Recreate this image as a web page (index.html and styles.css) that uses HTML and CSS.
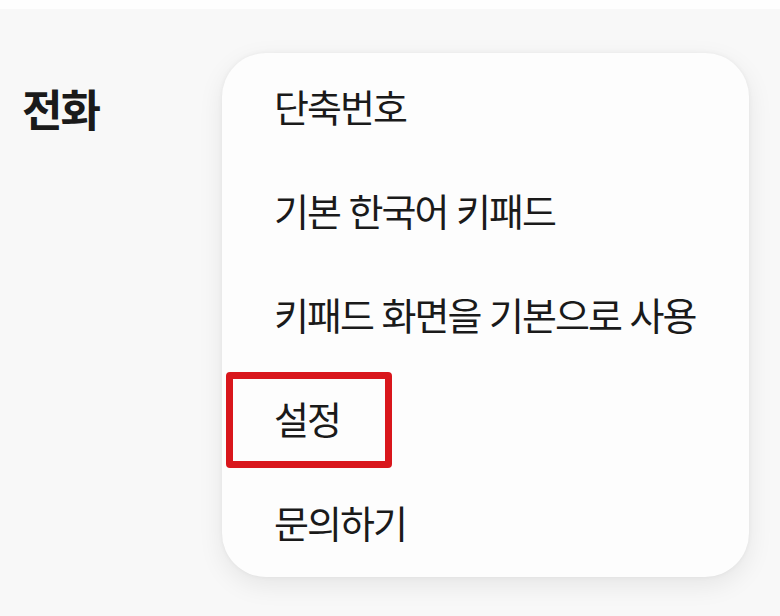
FILE: index.html
```html
<!DOCTYPE html>
<html lang="ko">
<head>
  <meta charset="UTF-8">
  <meta name="viewport" content="width=device-width, initial-scale=1.0">
  <title>전화 메뉴</title>
  <link rel="stylesheet" href="styles.css">
</head>
<body>
  <div id="screen">
    <div id="title">전화</div>

    <!-- 더보기 메뉴 -->
    <ul id="menu">
      <li class="menu-item">단축번호</li>
      <li class="menu-item">기본 한국어 키패드</li>
      <li class="menu-item">키패드 화면을 기본으로 사용</li>
      <li class="menu-item marked">
        설정
        <span class="mark"></span>
      </li>
      <li class="menu-item">문의하기</li>
    </ul>
  </div>
</body>
</html>
```

FILE: styles.css
```css
body {
  margin: 0;
  padding: 0;
  background-color: #f8f8f8;
  border-top: 9px solid #fefefe;
  font-family: "Noto Sans CJK KR", "Noto Sans", sans-serif;
  color: #1a1a1a;
  height: 607px;
  overflow: hidden;
}

#screen {
  display: flex;
  flex-direction: row;
  padding-top: 44px;
}

#title {
  width: 200px;
  padding-left: 22px;
  padding-top: 29px;
  font-size: 44px;
  font-weight: 700;
  letter-spacing: -2px;
  line-height: 52px;
}

#menu {
  list-style: none;
  margin: 0;
  padding: 0 0 4px 52px;
  width: 527px;
  box-sizing: border-box;
  background-color: #fdfdfd;
  border-radius: 44px;
  box-shadow: 0 8px 26px rgba(0, 0, 0, 0.08), 0 0 5px rgba(0, 0, 0, 0.05);
}

.menu-item {
  height: 104px;
  display: flex;
  align-items: center;
  font-size: 38px;
  letter-spacing: -2px;
  position: relative;
}

.mark {
  position: absolute;
  left: -48px;
  top: 7px;
  width: 166px;
  height: 96px;
  box-sizing: border-box;
  border: 7px solid #d9161c;
  border-radius: 4px;
}
```
